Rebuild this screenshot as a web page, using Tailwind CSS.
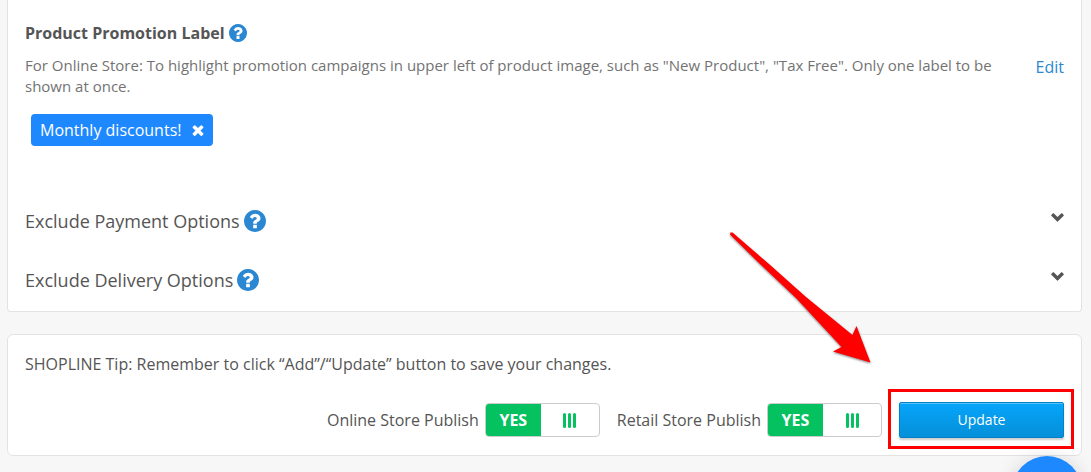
<!DOCTYPE html>
<html lang="en">
<head>
  <meta charset="UTF-8">
  <meta name="viewport" content="width=device-width, initial-scale=1">
  <title>Product settings</title>
  <script src="https://cdn.jsdelivr.net/npm/@tailwindcss/browser@4"></script>
</head>
<body class="bg-[#f7f7f7] text-[#555] font-['Open_Sans',sans-serif] min-h-screen overflow-hidden pl-[7px] pr-[9px]">

  <!-- Shared icons -->
  <svg class="hidden">
    <symbol id="icon-help" viewBox="128 128 1536 1536">
      <path d="M1024 1376v-192q0-14-9-23t-23-9h-192q-14 0-23 9t-9 23v192q0 14 9 23t23 9h192q14 0 23-9t9-23zm256-672q0-88-55.5-163t-138.5-116-170-41q-243 0-371 213-15 24 8 42l132 100q7 6 19 6 16 0 25-12 53-68 86-92 34-24 86-24 48 0 85.5 26t37.5 59q0 38-20 61t-68 45q-63 28-115.5 86.5t-52.5 125.5v36q0 14 9 23t23 9h192q14 0 23-9t9-23q0-19 21.5-49.5t54.5-49.5q32-18 49-28.5t46-35 44.5-48 28-60.5 12.5-81zm384 192q0 209-103 385.5t-279.5 279.5-385.5 103-385.5-103-279.5-279.5-103-385.5 103-385.5 279.5-279.5 385.5-103 385.5 103 279.5 279.5 103 385.5z"/>
    </symbol>
    <symbol id="icon-chevron" viewBox="0 0 13 9">
      <path d="M2.700 0.300L6.500 4.100L10.300 0.300Q10.700 0 11.100 0.300L12.700 1.900Q13 2.300 12.700 2.700L6.900 8.500Q6.500 8.800 6.100 8.500L0.300 2.700Q0 2.300 0.300 1.900L1.900 0.300Q2.300 0 2.700 0.300Z"/>
    </symbol>
  </svg>

  <!-- Product options -->
  <section class="bg-white border border-t-0 border-[#e3e3e3] rounded-b px-[17px] pt-[21px] pb-4">
    <h2 class="flex items-center gap-1 text-base leading-6 font-bold">
      Product Promotion Label
      <svg class="size-[18px] fill-[#2b87d1]"><use href="#icon-help"/></svg>
    </h2>
    <div class="flex justify-between mt-[10px]">
      <p class="max-w-[980px] pr-2 text-[15px] leading-[21px] text-[#737373]">For Online Store: To highlight promotion campaigns in upper left of product image, such as "New Product", "Tax Free". Only one label to be shown at once.</p>
      <a href="#" class="text-base leading-6 text-[#2b87d1]">Edit</a>
    </div>
    <div class="mt-[17px] ml-[6px] inline-flex items-center gap-[11px] h-8 px-[9px] rounded bg-[#1e88ff] text-white text-base font-medium">
      Monthly discounts!
      <button type="button" aria-label="Remove label">
        <svg class="size-3 fill-white" viewBox="302 238 1188 1316"><path d="M1490 1322q0 40-28 68l-136 136q-28 28-68 28t-68-28l-294-294-294 294q-28 28-68 28t-68-28l-136-136q-28-28-28-68t28-68l294-294-294-294q-28-28-28-68t28-68l136-136q28-28 68-28t68 28l294 294 294-294q28-28 68-28t68 28l136 136q28 28 28 68t-28 68l-294 294 294 294q28 28 28 68z"/></svg>
      </button>
    </div>

    <div class="mt-[60px] flex flex-col gap-[29px]">
      <button type="button" class="flex items-center justify-between h-[30px] text-lg">
        <span class="flex items-center gap-1">Exclude Payment Options <svg class="size-[22px] fill-[#2b87d1]"><use href="#icon-help"/></svg></span>
        <svg class="w-[13px] h-[9px] mb-2 fill-[#555]"><use href="#icon-chevron"/></svg>
      </button>
      <button type="button" class="flex items-center justify-between h-[30px] text-lg">
        <span class="flex items-center gap-1">Exclude Delivery Options <svg class="size-[22px] fill-[#2b87d1]"><use href="#icon-help"/></svg></span>
        <svg class="w-[13px] h-[9px] mb-2 fill-[#555]"><use href="#icon-chevron"/></svg>
      </button>
    </div>
  </section>

  <!-- Save bar -->
  <section class="mt-[22px] bg-white border border-[#e3e3e3] rounded-md px-[17px] pt-[17px] pb-[17px]">
    <p class="text-base leading-6">SHOPLINE Tip: Remember to click “Add”/“Update” button to save your changes.</p>
    <div class="mt-[26px] flex items-center justify-end gap-[17px]">
      <label class="flex items-center gap-[6px] text-base">
        Online Store Publish
        <input type="checkbox" checked class="sr-only">
        <span class="flex w-[115px] h-[34px] border border-[#ccc] rounded overflow-hidden">
          <span class="flex items-center justify-center w-[55px] bg-[#05c160] text-white font-bold">YES</span>
          <span class="flex flex-1 items-center justify-center gap-[2px]">
            <i class="w-[3px] h-[15px] rounded-xs bg-[#05c160]"></i>
            <i class="w-[3px] h-[15px] rounded-xs bg-[#05c160]"></i>
            <i class="w-[3px] h-[15px] rounded-xs bg-[#05c160]"></i>
          </span>
        </span>
      </label>
      <label class="flex items-center gap-[6px] text-base">
        Retail Store Publish
        <input type="checkbox" checked class="sr-only">
        <span class="flex w-[115px] h-[34px] border border-[#ccc] rounded overflow-hidden">
          <span class="flex items-center justify-center w-[55px] bg-[#05c160] text-white font-bold">YES</span>
          <span class="flex flex-1 items-center justify-center gap-[2px]">
            <i class="w-[3px] h-[15px] rounded-xs bg-[#05c160]"></i>
            <i class="w-[3px] h-[15px] rounded-xs bg-[#05c160]"></i>
            <i class="w-[3px] h-[15px] rounded-xs bg-[#05c160]"></i>
          </span>
        </span>
      </label>
      <div class="relative">
        <button type="button" class="block w-[165px] h-9 rounded-xs border border-[#0482c9] bg-linear-to-b from-[#06a5fb] to-[#058fd8] text-white text-sm font-medium shadow-[inset_0_1px_0_#55c0fa,0_2px_2px_rgba(0,0,0,0.2)]">Update</button>
        <!-- Highlight and pointer -->
        <div class="absolute -top-[13px] -left-[11px] -right-[10px] -bottom-[11px] border-3 border-[#f00] pointer-events-none"></div>
        <svg class="absolute bottom-[66px] right-[184px] w-[160px] h-[150px] pointer-events-none drop-shadow-[0_1px_1px_rgba(0,0,0,0.5)]" viewBox="720 222 160 150">
          <path fill="#f00" d="M730 234.500L730.500 232.500L732.500 232.500L769 264L806 297L852.500 335L856.500 326L870.500 362.500L833 351.500L841.500 347L796 298L760 264Z"/>
        </svg>
      </div>
    </div>
  </section>

  <!-- Chat launcher -->
  <button type="button" aria-label="Open chat" class="fixed right-[9px] -bottom-[54px] size-[70px] rounded-full bg-[#1e88ff] shadow-[0_2px_20px_rgba(0,0,0,0.15)]"></button>

</body>
</html>
